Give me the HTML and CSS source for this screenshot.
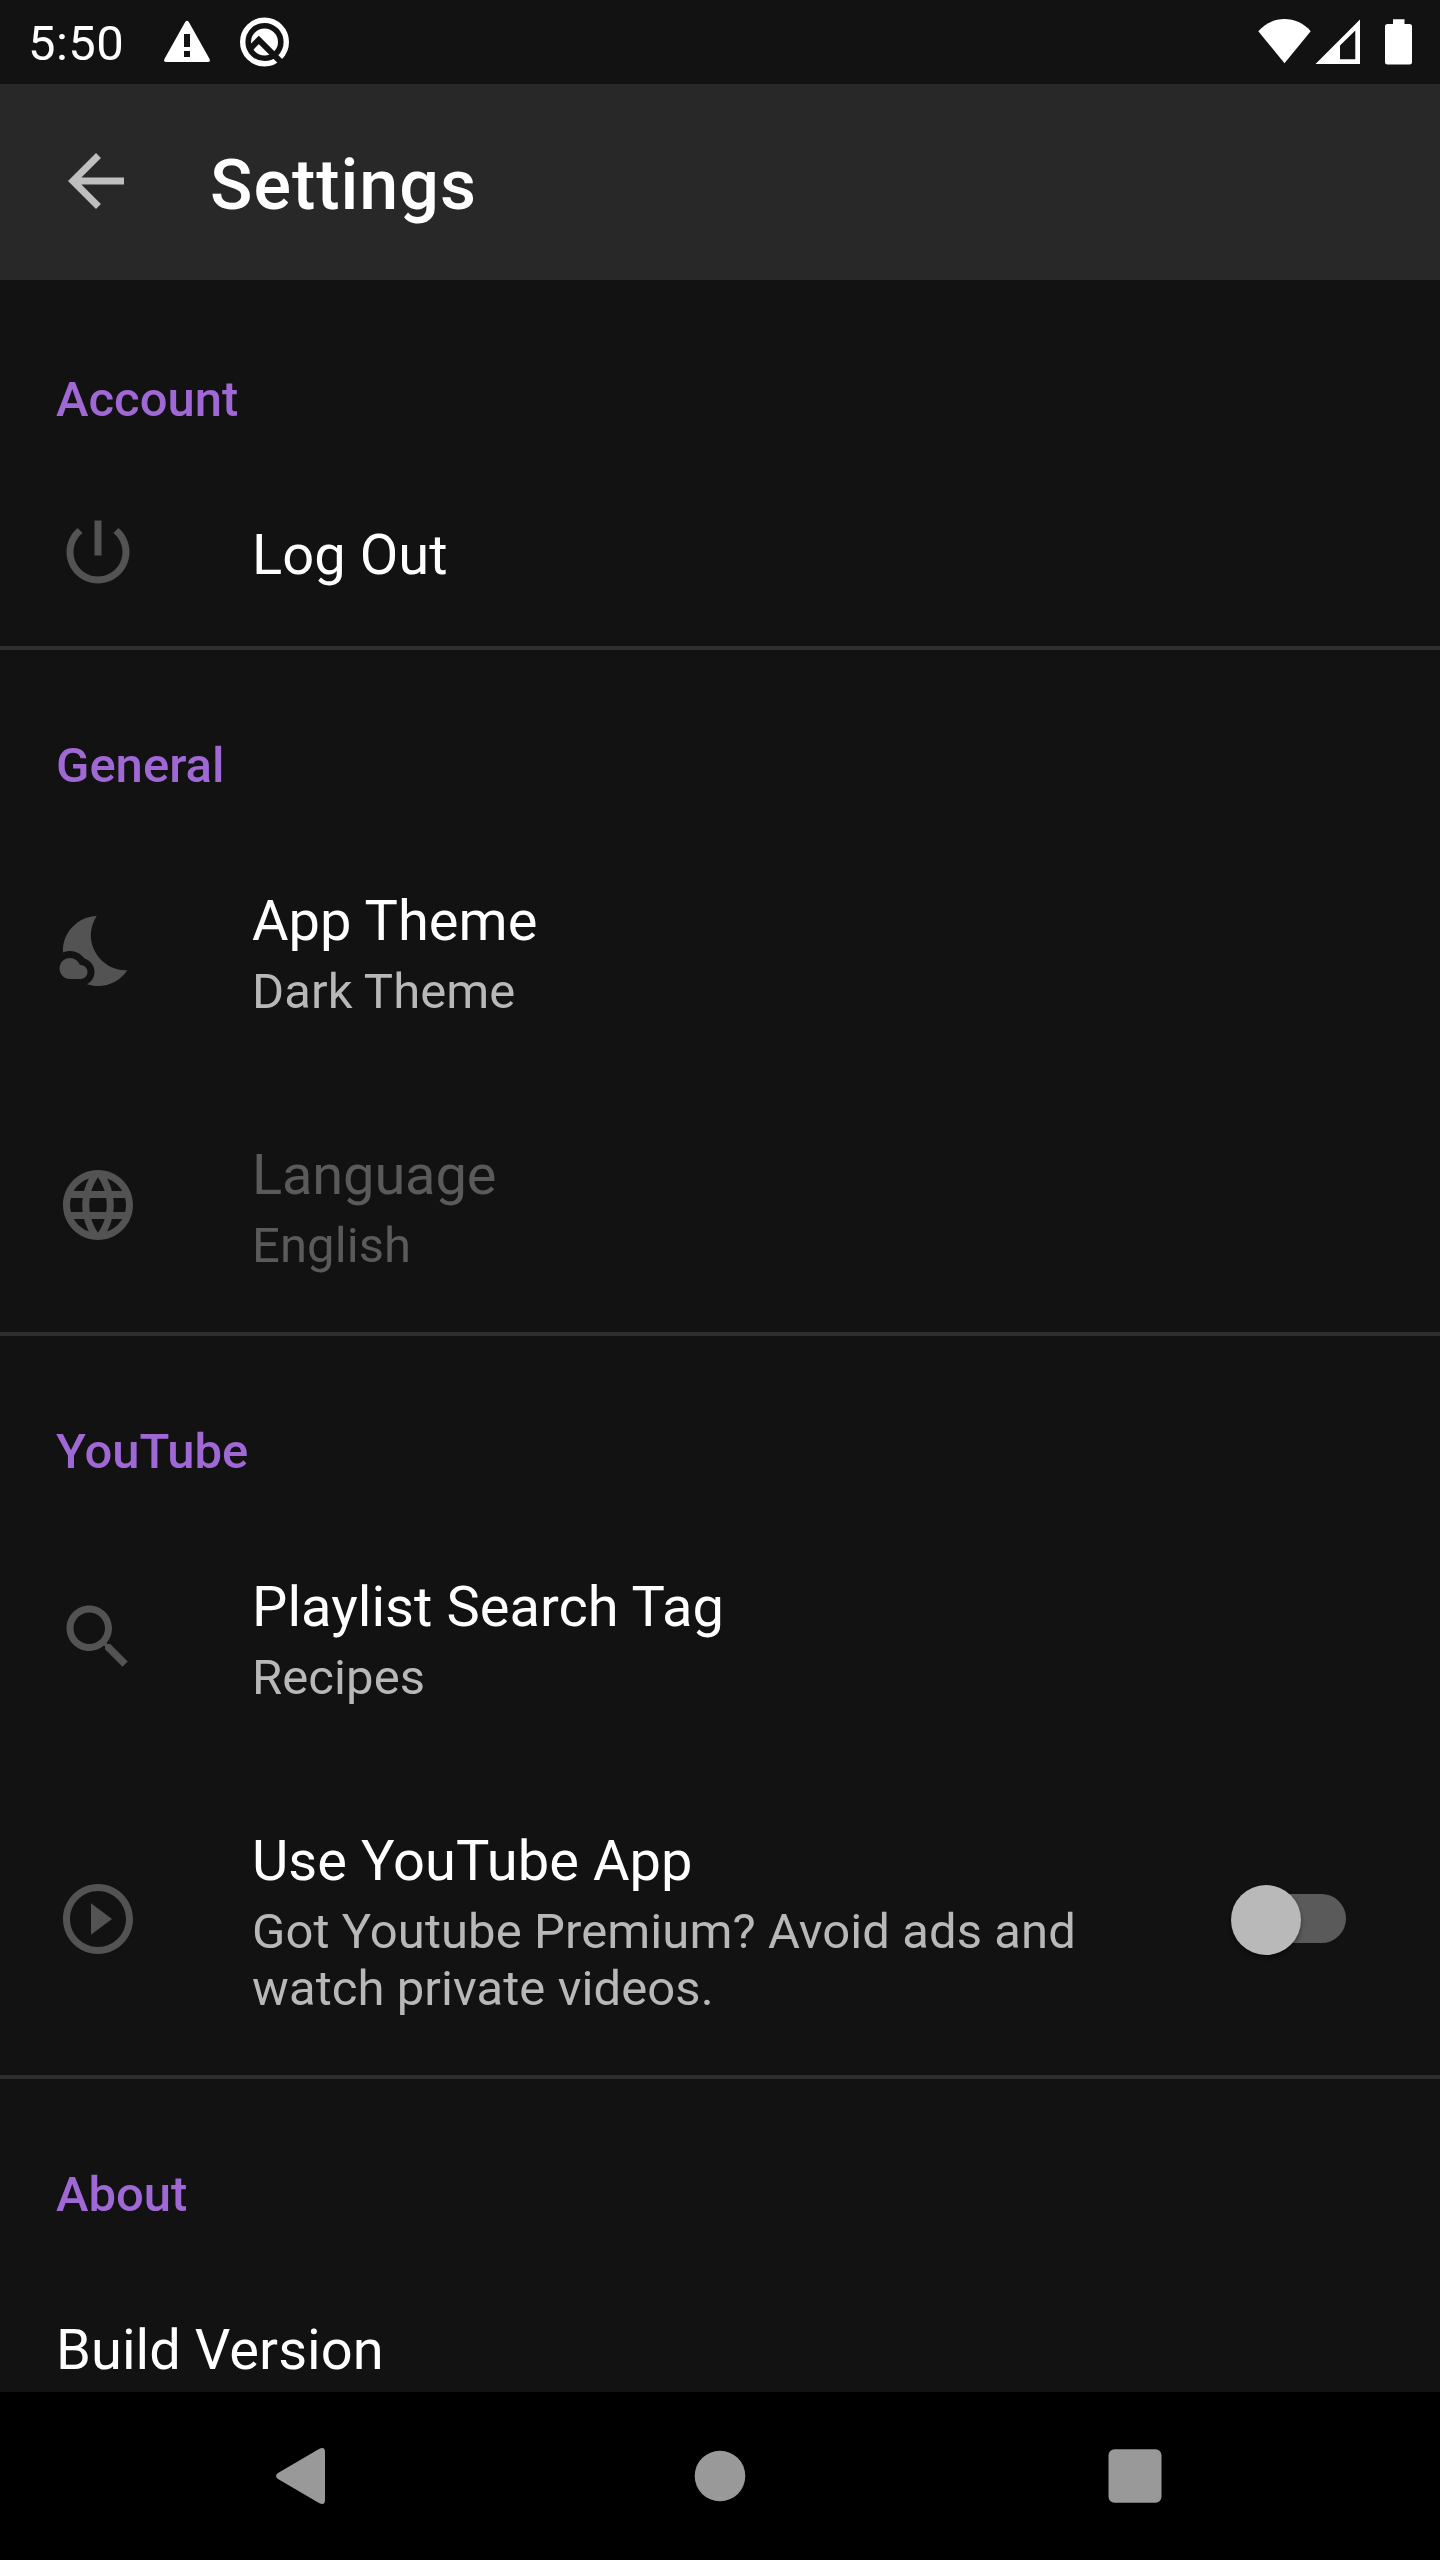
FILE: index.html
```html
<!DOCTYPE html>
<html lang="en">
<head>
<meta charset="utf-8">
<title>Settings</title>
<link rel="stylesheet" href="styles.css">
</head>
<body>
<div class="screen">
  <div class="status-bar">
    <span class="clock">5:50</span>
    <svg class="status-left" width="130" height="84" viewBox="160 0 130 84">
      <path fill="#fff" fill-rule="evenodd" d="M185.300 21.800Q187 19.800 188.700 21.800L209.700 59.300Q210.600 62 208 62H166Q163.400 62 164.300 59.300ZM184 34V47H190V34ZM184 51V57H190V51Z"/>
      <circle cx="264.500" cy="42" r="21.800" fill="none" stroke="#fff" stroke-width="5.400"/>
      <circle cx="264.500" cy="42" r="13.500" fill="#fff"/>
      <path d="M249 49.800L258.800 40L283 64.200" fill="none" stroke="#121212" stroke-width="6"/>
    </svg>
    <svg class="status-right" width="160" height="84" viewBox="1256 0 160 84">
      <path fill="#fff" d="M1258.300 31.300C1272 15 1297 15 1310.700 31.300L1284.500 63.300Z"/>
      <path fill="#fff" fill-rule="evenodd" d="M1360 19.500V64H1315.500ZM1355.300 30.500L1340 45.500V59.300H1355.300Z"/>
      <path fill="#fff" d="M1393 19.300H1404.500V24H1409.500Q1412 24 1412 26.500V62Q1412 64.500 1409.500 64.500H1387.500Q1385 64.500 1385 62V26.500Q1385 24 1387.500 24H1393Z"/>
    </svg>
  </div>
  <header class="app-bar">
    <svg class="back" viewBox="0 0 24 24"><path d="M20 11H7.830l5.590-5.590L12 4l-8 8 8 8 1.410-1.410L7.830 13H20v-2z"/></svg>
    <h1 class="title">Settings</h1>
  </header>
  <main class="list">
    <section class="section first">
      <h2 class="category">Account</h2>
      <div class="item">
        <svg class="icon" viewBox="0 0 24 24"><path d="M13 3h-2v10h2V3zm4.830 2.170l-1.420 1.420C17.990 7.860 19 9.810 19 12c0 3.870-3.130 7-7 7s-7-3.130-7-7c0-2.190 1.010-4.140 2.580-5.420L6.170 5.170C4.230 6.820 3 9.260 3 12c0 4.970 4.030 9 9 9s9-4.030 9-9c0-2.740-1.230-5.180-3.170-6.830z"/></svg>
        <div class="text"><div class="name">Log Out</div></div>
      </div>
    </section>
    <section class="section">
      <h2 class="category">General</h2>
      <div class="item">
        <svg class="icon" viewBox="0 0 24 24"><path d="M11.100 12.080C8.770 7.570 10.600 3.600 11.630 2.010 6.270 2.200 1.980 6.590 1.980 12c0 .14.020.28.020.42C2.620 12.150 3.290 12 4 12c1.660 0 3.180.83 4.100 2.150C9.770 14.630 11 16.170 11 18c0 1.520-.87 2.830-2.120 3.510.98.32 2.030.5 3.110.5 3.500 0 6.580-1.800 8.370-4.520-2.360.23-6.980-.97-9.260-5.410z"/><path d="M7 16h-.18C6.400 14.840 5.300 14 4 14c-1.660 0-3 1.340-3 3s1.340 3 3 3h3c1.100 0 2-.9 2-2s-.9-2-2-2z"/></svg>
        <div class="text"><div class="name">App Theme</div><div class="summary">Dark Theme</div></div>
      </div>
      <div class="item disabled">
        <svg class="icon" viewBox="0 0 24 24"><path d="M11.990 2C6.470 2 2 6.480 2 12s4.470 10 9.990 10C17.520 22 22 17.520 22 12S17.520 2 11.990 2zm6.930 6h-2.950c-.32-1.250-.78-2.450-1.380-3.560 1.840.63 3.370 1.910 4.330 3.560zM12 4.040c.83 1.200 1.480 2.530 1.910 3.960h-3.820c.43-1.430 1.080-2.760 1.910-3.960zM4.260 14C4.100 13.360 4 12.690 4 12s.1-1.360.26-2h3.380c-.08.66-.14 1.320-.14 2s.06 1.340.14 2H4.260zm.82 2h2.950c.32 1.250.78 2.450 1.380 3.560-1.840-.63-3.370-1.900-4.330-3.560zm2.950-8H5.080c.96-1.660 2.490-2.930 4.330-3.560C8.810 5.550 8.350 6.750 8.030 8zM12 19.960c-.83-1.200-1.480-2.530-1.910-3.960h3.820c-.43 1.430-1.080 2.760-1.910 3.960zM14.340 14H9.660c-.09-.66-.16-1.320-.16-2s.07-1.350.16-2h4.680c.09.65.16 1.320.16 2s-.07 1.340-.16 2zm.25 5.560c.6-1.110 1.060-2.310 1.380-3.560h2.950c-.96 1.650-2.490 2.930-4.330 3.560zM16.360 14c.08-.66.14-1.320.14-2s-.06-1.340-.14-2h3.380c.16.64.26 1.310.26 2s-.1 1.360-.26 2h-3.380z"/></svg>
        <div class="text"><div class="name">Language</div><div class="summary">English</div></div>
      </div>
    </section>
    <section class="section">
      <h2 class="category">YouTube</h2>
      <div class="item">
        <svg class="icon" viewBox="0 0 24 24"><path d="M15.500 14h-.79l-.28-.27C15.410 12.590 16 11.110 16 9.500 16 5.910 13.090 3 9.500 3S3 5.910 3 9.500 5.910 16 9.500 16c1.610 0 3.090-.59 4.230-1.570l.27.28v.79l5 4.990L20.490 19l-4.990-5zm-6 0C7.010 14 5 11.990 5 9.500S7.010 5 9.500 5 14 7.010 14 9.500 11.990 14 9.500 14z"/></svg>
        <div class="text"><div class="name">Playlist Search Tag</div><div class="summary">Recipes</div></div>
      </div>
      <div class="item">
        <svg class="icon icon-play" viewBox="0 0 24 24"><path d="M10 16.500l6-4.500-6-4.500v9zM12 2C6.480 2 2 6.480 2 12s4.480 10 10 10 10-4.480 10-10S17.520 2 12 2zm0 18c-4.410 0-8-3.590-8-8s3.590-8 8-8 8 3.590 8 8-3.590 8-8 8z"/></svg>
        <div class="text"><div class="name">Use YouTube App</div><div class="summary">Got Youtube Premium? Avoid ads and watch private videos.</div></div>
        <div class="switch"><div class="thumb"></div></div>
      </div>
    </section>
    <section class="section">
      <h2 class="category">About</h2>
      <div class="item">
        <div class="text"><div class="name">Build Version</div></div>
      </div>
    </section>
  </main>
  <nav class="nav-bar">
    <svg width="1440" height="168" viewBox="0 2392 1440 168" fill="#999">
      <path d="M319 2449Q325 2446 325 2452V2500Q325 2506 319 2503L278 2479Q274 2476 278 2473Z"/>
      <circle cx="720" cy="2476" r="25.300"/>
      <rect x="1108.500" y="2449.300" width="53" height="53.400" rx="6"/>
    </svg>
  </nav>
</div>
</body>
</html>
```
FILE: styles.css
```css
body {
  margin: 0;
  background: #121212;
  color: #fff;
  font-family: Roboto, sans-serif;
}

.screen {
  width: 1440px;
  height: 2560px;
  display: flex;
  flex-direction: column;
  overflow: hidden;
}

.status-bar {
  height: 84px;
  flex: none;
  display: flex;
}

.clock {
  width: 132px;
  padding: 15px 0 0 28px;
  font-size: 49px;
  line-height: 57px;
  letter-spacing: 0.4px;
}

.status-right {
  margin-left: auto;
  margin-right: 24px;
}

.app-bar {
  height: 196px;
  flex: none;
  display: flex;
  align-items: center;
  background: #282828;
}

.back {
  width: 84px;
  height: 84px;
  margin: 0 72px 3px 54px;
  fill: #bfbfbf;
}

.title {
  margin: 6px 0 0;
  font-size: 70px;
  line-height: 82px;
  font-weight: 500;
  letter-spacing: 1px;
}

.list {
  flex: 1;
  min-height: 0;
  overflow: hidden;
}

.section {
  border-top: 4px solid #2e2e2e;
}

.first {
  border-top-color: transparent;
}

.category {
  margin: 0;
  padding: 87px 56px 30px;
  color: #9f68d4;
  font-size: 49px;
  line-height: 57px;
  font-weight: 500;
}

.item {
  display: flex;
  align-items: center;
  padding: 0 56px;
}

.icon {
  width: 84px;
  height: 84px;
  flex: none;
  margin-right: 112px;
  fill: #535353;
}

.icon-play {
  margin-bottom: 1px;
}

.text {
  flex: 1;
  padding: 64px 0 58px;
}

.name {
  font-size: 56px;
  line-height: 66px;
  letter-spacing: 0.06px;
}

.summary {
  margin-top: 9px;
  color: #b8b8b8;
  font-size: 49px;
  line-height: 57px;
  letter-spacing: 0.08px;
}

.disabled .name,
.disabled .summary {
  color: #5a5a5a;
}

.disabled .name {
  letter-spacing: -0.15px;
}

.switch {
  width: 98px;
  height: 49px;
  flex: none;
  display: flex;
  align-items: center;
  margin: 0 38px 2px 74px;
  border-radius: 25px;
  background: #5a5a5a;
}

.thumb {
  width: 70px;
  height: 70px;
  flex: none;
  margin: 2px 0 0 -17px;
  border-radius: 50%;
  background: #b9b9b9;
  box-shadow: 0 3px 4px rgba(0, 0, 0, 0.4);
}

.nav-bar {
  height: 168px;
  flex: none;
  background: #000;
}

.nav-bar svg {
  display: block;
}
```
